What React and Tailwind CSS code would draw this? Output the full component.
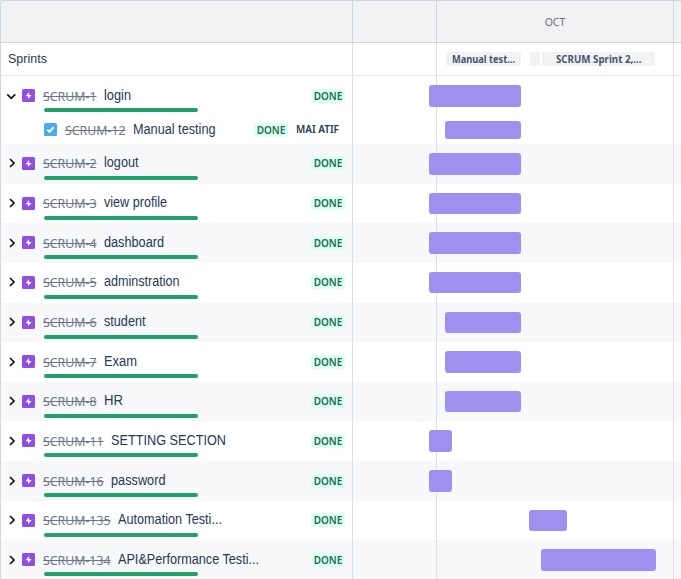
const UI = "font-['Noto_Sans','Open_Sans',sans-serif]";

const issues = [
  { id: 'SCRUM-1', title: 'login', keyW: 53, titleW: 27, start: 429.3, end: 520.7, open: true },
  { id: 'SCRUM-12', title: 'Manual testing', keyW: 60, titleW: 82.5, start: 445, end: 520.7, child: true },
  { id: 'SCRUM-2', title: 'logout', keyW: 53, titleW: 34.5, start: 429.3, end: 520.7 },
  { id: 'SCRUM-3', title: 'view profile', keyW: 53, titleW: 63, start: 429.3, end: 520.7 },
  { id: 'SCRUM-4', title: 'dashboard', keyW: 53, titleW: 60, start: 429.3, end: 520.7 },
  { id: 'SCRUM-5', title: 'adminstration', keyW: 53, titleW: 75.5, start: 429.3, end: 520.7 },
  { id: 'SCRUM-6', title: 'student', keyW: 53, titleW: 41.5, start: 445, end: 520.7 },
  { id: 'SCRUM-7', title: 'Exam', keyW: 53, titleW: 33, start: 445, end: 520.7 },
  { id: 'SCRUM-8', title: 'HR', keyW: 53, titleW: 19, start: 445, end: 520.7 },
  { id: 'SCRUM-11', title: 'SETTING SECTION', keyW: 60, titleW: 115, start: 429.3, end: 452 },
  { id: 'SCRUM-16', title: 'password', keyW: 60, titleW: 54.5, start: 429.3, end: 452 },
  { id: 'SCRUM-135', title: 'Automation Testi...', keyW: 67, titleW: 104, start: 529, end: 566.5 },
  { id: 'SCRUM-134', title: 'API&Performance Testi...', keyW: 67, titleW: 141, start: 541.3, end: 655.7 },
];

// Draws a label condensed to the width given for it.
function Fitted({ width, className, children }) {
  const fit = (el) => {
    if (!el) return;
    el.style.transform = 'none';
    el.style.transform = `scaleX(${width / el.getBoundingClientRect().width})`;
  };
  return (
    <span className="flex shrink-0" style={{ width }}>
      <span ref={fit} className={`inline-block shrink-0 origin-left whitespace-nowrap ${className}`}>
        {children}
      </span>
    </span>
  );
}

function Chevron({ open }) {
  return (
    <svg className="h-[12px] w-[12px] shrink-0" viewBox="0 0 12 12" fill="none" stroke="#111" strokeWidth="1.7">
      <path d={open ? 'M2.3 4.3l4 4 4-4' : 'M5 2l4 4-4 4'} />
    </svg>
  );
}

function EpicIcon() {
  return (
    <svg className="h-[13px] w-[13px] shrink-0" viewBox="0 0 13 13">
      <rect width="13" height="13" rx="1.5" fill="#904ee2" />
      <path d="M7.1 3v2.9h2.5L6 10V7.2H3.7z" fill="#fff" />
    </svg>
  );
}

function TaskIcon() {
  return (
    <svg className="h-[13px] w-[13px] shrink-0" viewBox="0 0 13 13">
      <rect width="13" height="13" rx="1.5" fill="#4bade8" />
      <path d="M3.3 6.7l2.2 2.2 4.2-4.7" fill="none" stroke="#fff" strokeWidth="1.8" />
    </svg>
  );
}

function Done() {
  return (
    <span className={`${UI} flex h-[14px] w-[34px] shrink-0 items-center justify-center rounded-[2px] bg-[#dcfff1] text-[10px] leading-none font-semibold text-[#216e4e]`}>
      DONE
    </span>
  );
}

function IssueKey({ issue }) {
  return (
    <Fitted width={issue.keyW + 0.5} className={`${UI} mt-[2px] text-[12.5px] leading-[16px] text-[#6b778c] line-through`}>
      {issue.id}
    </Fitted>
  );
}

function Title({ issue }) {
  return (
    <Fitted width={issue.titleW} className="font-['Liberation_Sans',Arial,sans-serif] text-[14px] leading-[16px] text-[#253858]">
      {issue.title}
    </Fitted>
  );
}

function Row({ issue, shaded }) {
  return (
    <div className={`flex shrink-0 ${issue.child ? 'h-[28.3px]' : 'h-[39.65px]'} ${shaded ? 'bg-[#f7f8f9]' : 'bg-white'}`}>
      <div className={`flex w-[352px] shrink-0 flex-col border-r border-[#dcdfe5] ${issue.child ? 'pl-[43px]' : 'pl-[4px]'}`}>
        {issue.child ? (
          <div className="flex h-[28px] items-center pr-[12px]">
            <TaskIcon />
            <span className="w-[8px] shrink-0" />
            <IssueKey issue={issue} />
            <span className="-mt-[1px] ml-[7px] flex">
              <Title issue={issue} />
            </span>
            <span className="grow" />
            <Done />
            <Fitted width={43} className={`${UI} ml-[8px] text-[10.5px] leading-none font-semibold text-[#253858]`}>
              MAI ATIF
            </Fitted>
            <span className="w-[9px] shrink-0" />
          </div>
        ) : (
          <>
            <div className="flex h-[32px] items-center pt-[7px] pr-[7px]">
              <Chevron open={issue.open} />
              <span className="w-[5px] shrink-0" />
              <EpicIcon />
              <span className="w-[8px] shrink-0" />
              <IssueKey issue={issue} />
              <span className="-mt-[2px] ml-[7.5px] flex">
                <Title issue={issue} />
              </span>
              <span className="grow" />
              <Done />
            </div>
            <div className="ml-[38.5px] h-[4px] w-[154px] shrink-0 rounded-full bg-[#22a06b]" />
          </>
        )}
      </div>
      <div className="relative flex grow">
        <div className="w-[84px] shrink-0 border-r border-[#dcdfe5]" />
        <div className="w-[237px] shrink-0 border-r border-[#dfe1e6]" />
        <div
          className={`absolute inset-y-0 my-auto rounded-[3px] bg-[#9f8fef] ${issue.child ? 'h-[17.5px]' : 'h-[21.5px]'}`}
          style={{ left: issue.start - 353, width: issue.end - issue.start }}
        />
      </div>
    </div>
  );
}

export default function App() {
  return (
    <div className="flex h-[579px] w-[681px] flex-col overflow-hidden rounded-tl-[3px] border-t border-l border-[#d2d5dc] bg-white">
      <div className="flex h-[42px] shrink-0 border-b border-[#cfd3db] bg-[#f1f2f4]">
        <div className="w-[352px] shrink-0 border-r border-[#cfd3db]" />
        <div className="w-[84px] shrink-0 border-r border-[#cfd3db]" />
        <div className={`${UI} flex w-[237px] shrink-0 items-center justify-center border-r border-[#d5d8df] pt-[2px] text-[10.5px] text-[#626f86]`}>
          OCT
        </div>
      </div>
      <div className="flex h-[33px] shrink-0 border-b border-[#e6e7eb]">
        <div className="flex w-[352px] shrink-0 items-center border-r border-[#dcdfe5] pl-[6.5px]">
          <Fitted width={39} className="-mt-[1px] font-['Liberation_Sans',Arial,sans-serif] text-[13.5px] leading-[16px] text-[#253858]">
            Sprints
          </Fitted>
        </div>
        <div className="w-[84px] shrink-0 border-r border-[#dcdfe5]" />
        <div className={`${UI} flex w-[237px] shrink-0 items-center border-r border-[#dfe1e6] pl-[9px] text-[10px] leading-none font-bold text-[#44546f]`}>
          <span className="flex h-[14px] w-[75px] items-center justify-center rounded-[2px] bg-[#f1f2f4]">
            <Fitted width={63} className="">Manual test...</Fitted>
          </span>
          <span className="ml-[9px] h-[14px] w-[10px] rounded-[2px] bg-[#f1f2f4]" />
          <span className="ml-[2px] flex h-[14px] w-[113px] items-center justify-center rounded-[2px] bg-[#f1f2f4]">
            <Fitted width={85.5} className="">SCRUM Sprint 2,...</Fitted>
          </span>
        </div>
      </div>
      {issues.map((issue, i) => (
        <Row key={issue.id} issue={issue} shaded={i > 1 && i % 2 === 0} />
      ))}
    </div>
  );
}
